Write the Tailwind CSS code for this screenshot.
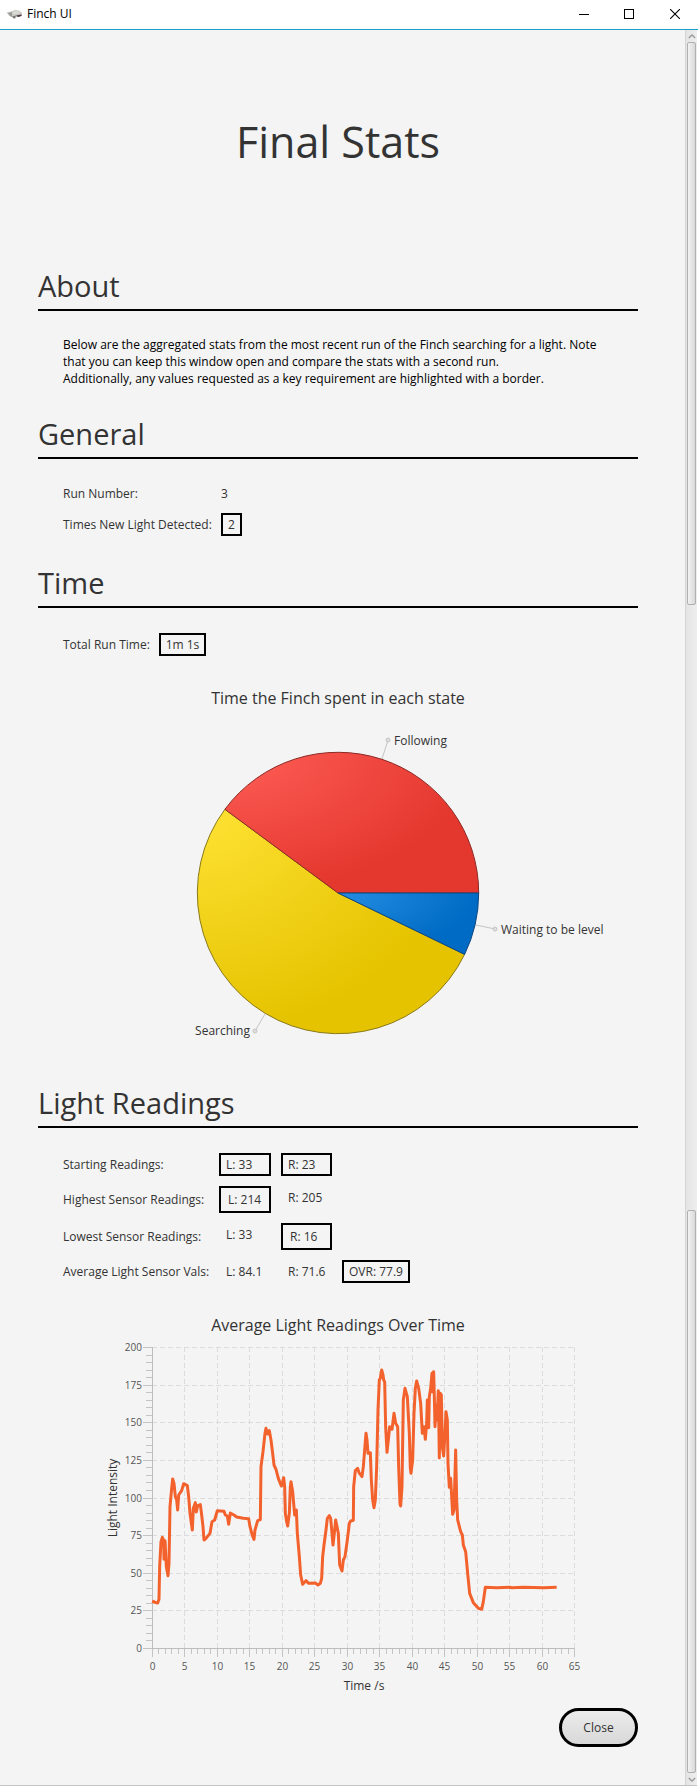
<!DOCTYPE html>
<html lang="en">
<head>
<meta charset="utf-8">
<meta name="viewport" content="width=device-width, initial-scale=1">
<title>Finch UI</title>
<script src="https://cdn.jsdelivr.net/npm/@tailwindcss/browser@4"></script>
</head>
<body class="flex min-h-screen flex-col bg-white pb-px font-['Open_Sans','Noto_Sans',sans-serif] text-[12px] text-[#333333]">

<header class="flex h-[30px] items-center border-b border-[#1a9fcb] bg-white pb-[2px] pl-[6px] text-black">
  <svg class="h-[12px] w-[17px]" viewBox="0 0 17 12" aria-hidden="true">
    <path d="M0.500 4.500L5 3.500L9 2L13 2.500L16 5V7.500L14 8.500L11 9L8.500 11L6 9L3 7.500Z" fill="#c9c9c4"/>
    <path d="M2 5L6 4L6 9L4 8Z" fill="#9b9b98"/>
    <path d="M6 4L12 3L14 5L8 6.500Z" fill="#dcdcd6"/>
    <path d="M6 8.500L10 7.500L9 10L8 10.500Z" fill="#77716f"/>
    <path d="M10 7.500L15.500 6.500V8L12 9Z" fill="#4b3446"/>
  </svg>
  <span class="ml-[4px] grow text-[12px] leading-[16px]">Finch UI</span>
  <button type="button" aria-label="Minimize" class="flex h-[26px] w-[45px] items-center justify-center">
    <svg class="size-[10px]" viewBox="0 0 10 10" shape-rendering="crispEdges"><path d="M0 5.500H10" stroke="#000"/></svg>
  </button>
  <button type="button" aria-label="Maximize" class="flex h-[26px] w-[46px] items-center justify-center">
    <svg class="size-[10px]" viewBox="0 0 10 10" shape-rendering="crispEdges"><path d="M.5 .5H9.500V9.500H.5Z" fill="none" stroke="#000"/></svg>
  </button>
  <button type="button" aria-label="Close window" class="flex h-[26px] w-[46px] items-center justify-center">
    <svg class="size-[10px]" viewBox="0 0 10 10"><path d="M0 0L10 10M10 0L0 10" stroke="#000" stroke-width="1.100"/></svg>
  </button>
</header>

<div class="mr-px flex grow border-b border-[#c3c3c3] bg-[#f4f4f4]">
  <main class="min-w-0 grow pt-[80px] pr-[47px] pb-[38px] pl-[38px]">
    <h1 class="text-center text-[43px] leading-[64px]">Final Stats</h1>

    <section class="mt-[92px]">
      <h2 class="border-b-2 border-black pb-[3px] text-[29px] leading-[40px]">About</h2>
      <p class="mt-[25px] pl-[25px] leading-[17px] whitespace-nowrap text-black">Below are the aggregated stats from the most recent run of the Finch searching for a light. Note<br>that you can keep this window open and compare the stats with a second run.<br>Additionally, any values requested as a key requirement are highlighted with a border.</p>
    </section>

    <section class="mt-[27px]">
      <h2 class="border-b-2 border-black pb-[3px] text-[29px] leading-[40px]">General</h2>
      <dl class="mt-[26px] grid grid-cols-[148px_auto] items-center justify-start gap-[10px] pl-[25px]">
        <dt class="leading-[18px] whitespace-nowrap">Run Number:</dt>
        <dd class="leading-[18px]">3</dd>
        <dt class="whitespace-nowrap">Times New Light Detected:</dt>
        <dd class="w-[21px] border-2 border-black text-center leading-[19px]">2</dd>
      </dl>
    </section>

    <section class="mt-[27px]">
      <h2 class="border-b-2 border-black pb-[3px] text-[29px] leading-[40px]">Time</h2>
      <dl class="mt-[25px] grid grid-cols-[86px_auto] items-center justify-start gap-[10px] pl-[25px]">
        <dt class="whitespace-nowrap">Total Run Time:</dt>
        <dd class="w-[47px] border-2 border-black text-center leading-[19px] whitespace-nowrap">1m 1s</dd>
      </dl>
      <h3 class="mt-[30px] text-center text-[16px] leading-[24px]">Time the Finch spent in each state</h3>
      <svg class="mx-auto mt-[15px] block w-full max-w-[600px]" viewBox="0 0 600 320" role="img" aria-label="Time the Finch spent in each state">
        <defs>
          <radialGradient id="red" cx="0" cy="0" r="1"><stop offset="0" stop-color="#ff5f58"/><stop offset="1" stop-color="#e4372e"/></radialGradient>
          <radialGradient id="yellow" cx="0" cy="0" r="1"><stop offset="0" stop-color="#ffe235"/><stop offset="1" stop-color="#e5c300"/></radialGradient>
          <radialGradient id="blue" cx="0" cy="0" r="1"><stop offset="0" stop-color="#248ce2"/><stop offset="1" stop-color="#006bc4"/></radialGradient>
        </defs>
        <g stroke="#c4c4c4" fill="#dedede">
          <path d="M344 34L350 15M438 200L457 204M227 289L217 306"/>
          <circle cx="350" cy="15" r="2"/><circle cx="457" cy="204" r="2"/><circle cx="217" cy="306" r="2"/>
        </g>
        <path d="M300 168L426.600 229.400A140.700 140.700 0 1 1 186.900 84.300Z" fill="url(#yellow)" stroke="#8a7918"/>
        <path d="M300 168L186.900 84.300A140.700 140.700 0 0 1 440.700 168Z" fill="url(#red)" stroke="#8c2a26"/>
        <path d="M300 168H440.700A140.700 140.700 0 0 1 426.600 229.400Z" fill="url(#blue)" stroke="#0c4680"/>
        <g fill="#333333" font-size="12">
          <text x="356" y="20">Following</text>
          <text x="463" y="209">Waiting to be level</text>
          <text x="212" y="310" text-anchor="end">Searching</text>
        </g>
      </svg>
    </section>

    <section class="mt-[38px]">
      <h2 class="border-b-2 border-black pb-[3px] text-[29px] leading-[40px]">Light Readings</h2>
      <table class="mt-[15px] ml-[15px] w-[367px] table-fixed border-separate border-spacing-[10px] text-left leading-[19px] whitespace-nowrap">
        <tr class="h-[23px]">
          <th scope="row" class="w-[146px] p-0 font-normal">Starting Readings:</th>
          <td class="w-[52px] border-2 border-black px-[5px] py-0">L: 33</td>
          <td class="w-[51px] border-2 border-black px-[5px] py-0">R: 23</td>
          <td class="w-[68px] p-0"></td>
        </tr>
        <tr class="h-[27px]">
          <th scope="row" class="p-0 font-normal">Highest Sensor Readings:</th>
          <td class="border-2 border-black px-[7px] py-0">L: 214</td>
          <td class="border-2 border-transparent px-[5px] py-0 align-top">R: 205</td>
          <td class="p-0"></td>
        </tr>
        <tr class="h-[27px]">
          <th scope="row" class="p-0 font-normal">Lowest Sensor Readings:</th>
          <td class="border-2 border-transparent px-[5px] py-0 align-top">L: 33</td>
          <td class="border-2 border-black px-[7px] py-0">R: 16</td>
          <td class="p-0"></td>
        </tr>
        <tr class="h-[23px]">
          <th scope="row" class="p-0 font-normal">Average Light Sensor Vals:</th>
          <td class="border-2 border-transparent px-[5px] py-0">L: 84.1</td>
          <td class="border-2 border-transparent px-[5px] py-0">R: 71.6</td>
          <td class="border-2 border-black px-[5px] py-0">OVR: 77.9</td>
        </tr>
      </table>
      <h3 class="mt-[20px] text-center text-[16px] leading-[24px]">Average Light Readings Over Time</h3>
      <svg class="mx-auto block w-full max-w-[600px]" viewBox="0 0 600 360" role="img" aria-label="Average Light Readings Over Time">
        <g id="grid" stroke="#dcdcdc" stroke-dasharray="5 3"></g>
        <g id="ticks" stroke="#c4c4c4"></g>
        <path d="M114.500 10V311.500H536" fill="none" stroke="#bdbdbd"/>
        <g id="labels" fill="#555555" font-size="10"></g>
        <g fill="#333333" font-size="12">
          <text x="326" y="353" text-anchor="middle">Time /s</text>
          <text transform="translate(79 161) rotate(-90)" text-anchor="middle">Light Intensity</text>
        </g>
        <polyline transform="translate(52 -37) scale(.33333)" fill="none" stroke="#f3622d" stroke-width="9" stroke-linejoin="round" stroke-linecap="butt" points="189,910 191,904 194,907 203,909 207,898 209,800 213,725 217,712 221,722 222,778 225,722 229,800 234,827 237,790 240,620 245,565 248,537 252,550 256,590 260,600 263,630 266,585 275,572 281,551 292,557 296,590 300,640 303,662 307,690 310,625 316,608 319,636 323,617 331,614 335,645 339,680 342,720 348,715 352,710 360,700 366,665 374,660 382,632 402,634 406,645 412,648 416,673 421,639 432,645 440,651 460,655 476,656 480,680 487,706 492,718 495,690 503,662 511,659 513,500 519,455 525,400 528,385 533,402 538,392 543,420 548,460 552,495 558,508 565,535 574,558 578,545 581,533 584,560 586,640 590,665 593,678 598,640 601,560 603,545 608,575 614,645 619,630 622,700 628,770 632,825 638,853 648,842 656,850 676,849 684,855 691,850 695,835 698,770 702,735 708,690 712,655 718,647 722,655 726,700 729,735 733,700 737,660 741,680 745,700 749,795 756,813 760,780 765,770 772,720 778,670 782,663 790,661 791,560 796,512 803,505 807,518 816,530 820,500 824,450 828,400 831,420 834,460 841,458 844,540 848,600 852,623 856,600 860,500 864,330 868,240 871,235 875,210 879,225 881,240 884,245 887,380 891,457 895,420 899,380 906,388 912,340 917,370 923,380 926,500 930,612 932,618 936,560 940,300 945,265 952,290 958,400 961,505 963,520 968,480 972,340 976,265 980,243 986,265 992,310 997,400 1002,380 1006,418 1010,370 1012,300 1016,383 1018,290 1022,265 1026,220 1027,275 1031,215 1033,290 1035,380 1039,315 1041,360 1045,272 1048,474 1051,280 1054,285 1057,440 1061,468 1065,400 1068,335 1072,360 1074,490 1078,562 1082,535 1085,590 1088,643 1092,630 1097,450 1100,600 1103,660 1112,695 1117,705 1120,735 1127,755 1133,820 1139,880 1150,908 1165,925 1175,928 1180,905 1186,862 1220,863 1260,862 1265,863 1300,862 1361,863 1400,862"/>
      </svg>
    </section>

    <div class="mt-[11px] flex justify-end">
      <button type="button" class="h-[39px] w-[79px] rounded-full border-3 border-black bg-linear-to-b from-[#ececec] to-[#d8d8d8] text-[12px] leading-[17px]">Close</button>
    </div>
  </main>

  <div class="flex w-[12px] shrink-0 flex-col border-l border-[#d6d6d6] bg-linear-to-r from-[#e4e4e4] to-[#eeeeee] pl-px" aria-hidden="true">
    <div class="flex h-[12px] items-center justify-center"><svg class="h-[5px] w-[8px]" viewBox="0 0 8 5"><path d="M.8 4L4 1L7.200 4" fill="none" stroke="#999" stroke-width="1.300"/></svg></div>
    <div class="w-[9px] flex-[562] rounded-[2px] border border-[#b0b0b0] bg-linear-to-r from-[#f2f2f2] to-[#d9d9d9]"></div>
    <div class="flex-[607]"></div>
    <div class="w-[9px] flex-[562] rounded-[2px] border border-[#b0b0b0] bg-linear-to-r from-[#f2f2f2] to-[#d9d9d9]"></div>
    <div class="flex h-[12px] items-center justify-center"><svg class="h-[5px] w-[8px]" viewBox="0 0 8 5"><path d="M.8 1L4 4L7.200 1" fill="none" stroke="#999" stroke-width="1.300"/></svg></div>
  </div>
</div>

<script>
  // Axes: 0-65 seconds across, 0-200 intensity upwards.
  const left = 114, right = 536, top_ = 10, bottom = 311;
  const px = t => Math.round(left + t * (right - left) / 65) + 0.5;
  const py = v => Math.round(bottom - v * (bottom - top_) / 200) + 0.5;
  const line = (x1, y1, x2, y2) => `<line x1="${x1}" y1="${y1}" x2="${x2}" y2="${y2}"/>`;
  const text = (x, y, anchor, s) => `<text x="${x}" y="${y}" text-anchor="${anchor}">${s}</text>`;
  let grid = '', ticks = '', labels = '';
  for (let t = 0; t <= 65; t++) {
    const major = t % 5 === 0;
    ticks += line(px(t), bottom, px(t), bottom + (major ? 9 : 6));
    if (major) {
      if (t) grid += line(px(t), bottom, px(t), top_);
      labels += text(px(t), 333, 'middle', t);
    }
  }
  for (let v = 0; v <= 200; v += 5) {
    const major = v % 25 === 0;
    ticks += line(left - (major ? 9 : 6), py(v), left, py(v));
    if (major) {
      if (v) grid += line(left, py(v), right, py(v));
      labels += text(left - 10, py(v) + 3, 'end', v);
    }
  }
  document.getElementById('grid').innerHTML = grid;
  document.getElementById('ticks').innerHTML = ticks;
  document.getElementById('labels').innerHTML = labels;
</script>
</body>
</html>
